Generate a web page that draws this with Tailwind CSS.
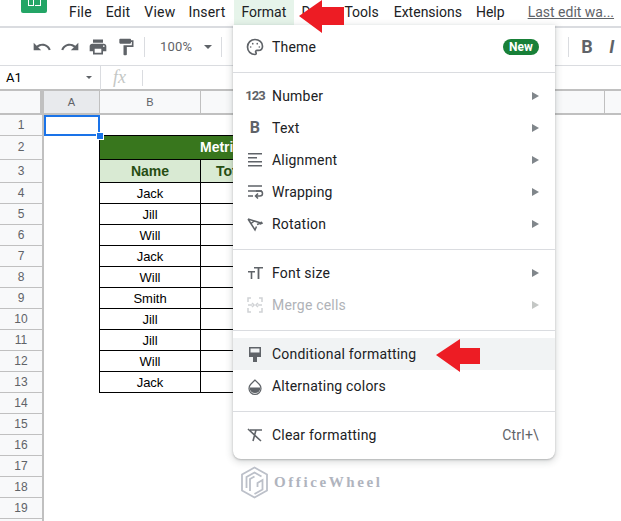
<!DOCTYPE html>
<html lang="en">
<head>
    <meta charset="UTF-8">
    <title>Format menu</title>
    <script src="https://cdn.jsdelivr.net/npm/@tailwindcss/browser@4"></script>
</head>
<body class="bg-white">
<div class="relative w-[621px] h-[521px] overflow-hidden font-['Roboto',sans-serif] text-[#202124]">

    <!-- menu bar -->
    <div class="relative h-[28px] border-b-2 border-[#dadce0] flex text-[14px] leading-[25px] tracking-[0.2px]">
        <div class="absolute left-[21px] top-0 w-[26px] h-[13px] bg-[#23a566] rounded-b-[2px] flex justify-center gap-[1px]">
            <div class="w-[6px] h-[6px] border-x border-b border-white"></div>
            <div class="w-[6px] h-[6px] border-r border-b border-white"></div>
        </div>
        <span class="ml-[69px]">File</span>
        <span class="ml-[14px]">Edit</span>
        <span class="ml-[14px]">View</span>
        <span class="ml-[13px]">Insert</span>
        <span class="ml-[9px] px-[7px] w-[60px] h-[25px] bg-[#e6f4ea] tracking-normal">Format</span>
        <span class="ml-[7px] w-[43px]">Data</span>
        <span class="tracking-normal">Tools</span>
        <span class="ml-[15px] tracking-normal">Extensions</span>
        <span class="ml-[14px] tracking-normal">Help</span>
        <span class="ml-[23px] underline text-[#5f6368] tracking-normal">Last edit wa...</span>
    </div>

    <!-- toolbar -->
    <div class="h-[38px] border-b border-[#dadce0] flex items-center text-[#5f6368]">
        <svg class="ml-[32px] w-[20px] h-[20px]" viewBox="0 0 24 24" fill="#5f6368"><path d="M12.5 8c-2.65 0-5.05.99-6.9 2.6L2 7v9h9l-3.62-3.62c1.39-1.16 3.16-1.88 5.12-1.88 3.54 0 6.55 2.31 7.6 5.5l2.37-.78C21.08 11.03 17.15 8 12.5 8z"/></svg>
        <svg class="ml-[8px] w-[20px] h-[20px]" viewBox="0 0 24 24" fill="#5f6368"><path d="M18.4 10.6C16.55 8.99 14.15 8 11.5 8c-4.65 0-8.58 3.03-9.96 7.22L3.9 16c1.05-3.19 4.05-5.5 7.6-5.5 1.95 0 3.73.72 5.12 1.88L13 16h9V7l-3.6 3.6z"/></svg>
        <svg class="ml-[8px] w-[20px] h-[20px]" viewBox="0 0 24 24" fill="#5f6368"><path d="M19 8H5c-1.66 0-3 1.34-3 3v6h4v4h12v-4h4v-6c0-1.66-1.34-3-3-3zm-3 11H8v-5h8v5zm3-7c-.55 0-1-.45-1-1s.45-1 1-1 1 .45 1 1-.45 1-1 1zm-1-9H6v4h12V3z"/></svg>
        <svg class="ml-[8px] w-[20px] h-[20px]" viewBox="0 0 24 24" fill="#5f6368"><path d="M18 4V3c0-.55-.45-1-1-1H5c-.55 0-1 .45-1 1v4c0 .55.45 1 1 1h12c.55 0 1-.45 1-1V6h1v4H9v11c0 .55.45 1 1 1h2c.55 0 1-.45 1-1v-9h8V4h-3z"/></svg>
        <div class="ml-[8px] w-px h-[20px] bg-[#dadce0]"></div>
        <span class="ml-[15px] text-[13px] tracking-[0.2px]">100%</span>
        <div class="ml-[12px] border-x-[4px] border-x-transparent border-t-[4px] border-t-[#5f6368]"></div>
        <div class="ml-[9px] w-px h-[20px] bg-[#dadce0]"></div>
        <div class="ml-[346px] w-px h-[20px] bg-[#dadce0]"></div>
        <span class="ml-[12px] w-[28px] font-bold text-[18px]">B</span>
        <span class="italic font-bold text-[18px]">I</span>
    </div>

    <!-- formula bar -->
    <div class="h-[25px] border-b-2 border-[#c0c0c0] flex items-center">
        <span class="ml-[6px] w-[80px] text-[13px] text-[#000]">A1</span>
        <div class="border-x-[3px] border-x-transparent border-t-[3px] border-t-[#5f6368]"></div>
        <div class="ml-[8px] w-px h-[24px] bg-[#dadce0]"></div>
        <span class="ml-[12px] w-[29px] italic font-['Liberation_Serif',serif] text-[18px] text-[#c4c7c5]">fx</span>
        <div class="w-px h-[16px] bg-[#dadce0]"></div>
    </div>

    <!-- sheet -->
    <div class="font-['Liberation_Sans',sans-serif] text-[13px] text-black">
        <div class="flex h-[24px] border-b-2 border-[#c0c0c0] bg-[#f8f9fa] text-[#5f6368] text-[11px] leading-[22px] text-center">
            <div class="w-[44px] border-r-4 border-[#c0c0c0]"></div>
            <div class="w-[56px] bg-[#e8eaed] border-r border-[#c0c0c0]">A</div>
            <div class="w-[101px] border-r border-[#c0c0c0]">B</div>
            <div class="w-[404px] border-r border-[#c0c0c0]"></div>
        </div>
        <div id="rows"></div>
    </div>

    <!-- selected cell A1 -->
    <div class="absolute left-[44px] top-[115px] w-[56px] h-[21px] border-2 border-[#1a73e8]"></div>
    <div class="absolute left-[96px] top-[132px] w-[6px] h-[6px] bg-[#1a73e8] border border-white box-content"></div>

    <!-- format menu -->
    <div class="absolute left-[233px] top-[25px] w-[322px] h-[434px] bg-white rounded-b-[8px] shadow-[0_2px_6px_2px_rgba(60,64,67,0.15),0_1px_2px_rgba(60,64,67,0.3)] pt-[6px] text-[14px] tracking-[0.2px]">
        <div class="flex items-center h-[32px] pl-[12px] pr-[16px]">
            <svg class="w-[20px] h-[20px]" viewBox="0 0 24 24" fill="none" stroke="#5f6368" stroke-width="2"><path d="M12 3a9 9 0 0 0 0 18c1.2 0 1.9-1.3 1.1-2.4-.9-1.2 0-2.6 1.4-2.6H16c2.8 0 5-2 5-5 0-4.4-4-8-9-8z"/><circle cx="6.800" cy="12" r="1" fill="#5f6368" stroke="none"/><circle cx="9.300" cy="8" r="1" fill="#5f6368" stroke="none"/><circle cx="14.700" cy="8" r="1" fill="#5f6368" stroke="none"/><circle cx="17.200" cy="12" r="1" fill="#5f6368" stroke="none"/></svg>
            <span class="ml-[7px] flex-1">Theme</span>
            <span class="w-[36px] h-[16px] rounded-full bg-[#188038] text-white text-[12px] font-bold leading-[16px] text-center tracking-normal">New</span>
        </div>
        <div class="h-px bg-[#dadce0] mt-[9px] mb-[7px]"></div>

        <div class="flex items-center h-[32px] pl-[12px] pr-[16px]">
            <span class="w-[20px] text-center text-[13px] font-bold tracking-[-1px] text-[#5f6368]">123</span>
            <span class="ml-[7px] flex-1">Number</span><div class="border-y-[4px] border-y-transparent border-l-[7px] border-l-[#80868b]"></div>
        </div>
        <div class="flex items-center h-[32px] pl-[12px] pr-[16px]">
            <span class="w-[20px] text-center text-[16px] font-bold text-[#5f6368]">B</span>
            <span class="ml-[7px] flex-1">Text</span><div class="border-y-[4px] border-y-transparent border-l-[7px] border-l-[#80868b]"></div>
        </div>
        <div class="flex items-center h-[32px] pl-[12px] pr-[16px]">
            <svg class="w-[20px] h-[20px]" viewBox="0 0 20 20" fill="#5f6368"><path d="M3 3h14v1.500H3zM3 7h9v1.500H3zM3 11h14v1.500H3zM3 15h14v1.500H3z"/></svg>
            <span class="ml-[7px] flex-1">Alignment</span><div class="border-y-[4px] border-y-transparent border-l-[7px] border-l-[#80868b]"></div>
        </div>
        <div class="flex items-center h-[32px] pl-[12px] pr-[16px]">
            <svg class="w-[20px] h-[20px]" viewBox="0 0 20 20" fill="none" stroke="#5f6368" stroke-width="1.5"><path d="M3 4h14M3 9h14M3 14h5"/><path d="M11 9h4a2.500 2.500 0 0 1 0 5h-4M13 11.500 10.500 14l2.500 2.500"/></svg>
            <span class="ml-[7px] flex-1">Wrapping</span><div class="border-y-[4px] border-y-transparent border-l-[7px] border-l-[#80868b]"></div>
        </div>
        <div class="flex items-center h-[32px] pl-[12px] pr-[16px]">
            <svg class="w-[20px] h-[20px]" viewBox="0 0 20 20" fill="none" stroke="#5f6368" stroke-width="1.5"><path d="M3 5l7 11 1.500-3.500M3 5l13 4-4 1.500M6 9.500l4-3"/><path d="M16 7l2 2.500-3 1.500z" fill="#5f6368" stroke="none"/></svg>
            <span class="ml-[7px] flex-1">Rotation</span><div class="border-y-[4px] border-y-transparent border-l-[7px] border-l-[#80868b]"></div>
        </div>
        <div class="h-px bg-[#dadce0] mt-[9px] mb-[7px]"></div>

        <div class="flex items-center h-[32px] pl-[12px] pr-[16px]">
            <svg class="w-[20px] h-[20px]" viewBox="0 0 20 20" fill="#5f6368"><path d="M3 8h7v1.500H7.300V16H5.700V9.500H3zM9 4h9v1.600h-3.600V16h-1.800V5.600H9z"/></svg>
            <span class="ml-[7px] flex-1">Font size</span><div class="border-y-[4px] border-y-transparent border-l-[7px] border-l-[#80868b]"></div>
        </div>
        <div class="flex items-center h-[32px] pl-[12px] pr-[16px] text-[#b0b3b8]">
            <svg class="w-[20px] h-[20px]" viewBox="0 0 20 20" fill="none" stroke="#d0d2d5" stroke-width="1.5"><path d="M3 7V3h3M14 3h3v4M3 13v4h3M14 17h3v-4M3 10h4M13 10h4M7 8l2 2-2 2M13 8l-2 2 2 2"/></svg>
            <span class="ml-[7px] flex-1">Merge cells</span><div class="border-y-[4px] border-y-transparent border-l-[7px] border-l-[#c4c7c5]"></div>
        </div>
        <div class="h-px bg-[#dadce0] mt-[9px] mb-[7px]"></div>

        <div class="flex items-center h-[32px] pl-[12px] pr-[16px] bg-[#f1f3f4]">
            <svg class="w-[20px] h-[20px]" viewBox="0 0 20 20"><path d="M4 3h12v10H4z" fill="#5f6368"/><path d="M5.500 4.500h9v4h-9z" fill="#f1f3f4"/><path d="M8 13h4v5H8z" fill="#5f6368"/></svg>
            <span class="ml-[7px] flex-1">Conditional formatting</span>
        </div>
        <div class="flex items-center h-[32px] pl-[12px] pr-[16px]">
            <svg class="w-[20px] h-[20px]" viewBox="0 0 20 20"><path d="M10 4 5.500 8.500a6 6 0 1 0 9 0z" fill="none" stroke="#5f6368" stroke-width="1.200"/><path d="M4.500 11.500h11a5.500 5.500 0 0 1-11 0z" fill="#5f6368"/></svg>
            <span class="ml-[7px] flex-1">Alternating colors</span>
        </div>
        <div class="h-px bg-[#dadce0] mt-[9px] mb-[7px]"></div>

        <div class="flex items-center h-[32px] pl-[12px] pr-[16px]">
            <svg class="w-[20px] h-[20px]" viewBox="0 0 20 20" fill="none" stroke="#5f6368" stroke-width="1.600"><path d="M5 5h12M11 5l-3 11M3 4l13 12"/></svg>
            <span class="ml-[7px] flex-1">Clear formatting</span>
            <span class="text-[#5f6368] tracking-[0.2px]">Ctrl+\</span>
        </div>
    </div>

    <!-- annotation arrows -->
    <svg class="absolute left-[298px] top-0" width="47" height="33" viewBox="0 0 47 33"><path d="M1 16 24 0v7h22v18H24v8z" fill="#ed1c24"/></svg>
    <svg class="absolute left-[436px] top-[338px]" width="45" height="34" viewBox="0 0 45 34"><path d="M0 17 24 1v9h20v16H24v8z" fill="#ed1c24"/></svg>

    <!-- watermark -->
    <div class="absolute left-[240px] top-[466px] flex items-center gap-[5px] text-[#b0b4be]">
        <svg width="29" height="33" viewBox="0 0 29 33" fill="none" stroke="#bcc0c9" stroke-width="1.800"><path d="M14.500 1.500 27 8.500v16L14.500 31.500 2 24.500v-16zM6.500 22V11l8-4.500 7 4M10 25V13l4.500-2.500M14.500 28l8-4.500V14l-5 3v4"/></svg>
        <span class="font-['Liberation_Serif',serif] font-bold text-[15px] tracking-[2.6px]">OfficeWheel</span>
    </div>
</div>

<script>
    // spreadsheet rows: [row number, name]
    var names = { 4: 'Jack', 5: 'Jill', 6: 'Will', 7: 'Jack', 8: 'Will', 9: 'Smith', 10: 'Jill', 11: 'Jill', 12: 'Will', 13: 'Jack' };
    var head = 'shrink-0 w-[44px] bg-[#f8f9fa] border-r-2 border-b border-[#c0c0c0] text-[#5f6368] text-center text-[12px] ';
    var html = '';
    for (var n = 1; n <= 20; n++) {
        var h = n === 2 ? 'h-[24px] leading-[23px]' : n === 3 ? 'h-[23px] leading-[22px]' : 'h-[21px] leading-[21px]';
        var row = '<div class="flex ' + h + '"><div class="' + head + (n === 1 ? 'bg-[#e8eaed]' : '') + '">' + (n < 20 ? n : '') + '</div>';
        if (n === 2) {
            row += '<div class="ml-[55px] w-[300px] -mt-px bg-[#38761d] border border-black text-white font-bold text-[14px] pl-[100px]">Metrics</div>';
        } else if (n === 3) {
            row += '<div class="ml-[55px] w-[102px] bg-[#d9ead3] border-x border-b border-black text-center font-bold text-[14px] text-[#274e13]">Name</div>'
                + '<div class="w-[101px] bg-[#d9ead3] border-r border-b border-black font-bold text-[14px] text-[#274e13] pl-[15px]">Total</div>';
        } else if (names[n]) {
            row += '<div class="ml-[55px] w-[102px] border-x border-b border-black text-center">' + names[n] + '</div>'
                + '<div class="w-[101px] border-r border-b border-black"></div>';
        }
        html += row + '</div>';
    }
    document.getElementById('rows').innerHTML = html;
</script>
</body>
</html>
